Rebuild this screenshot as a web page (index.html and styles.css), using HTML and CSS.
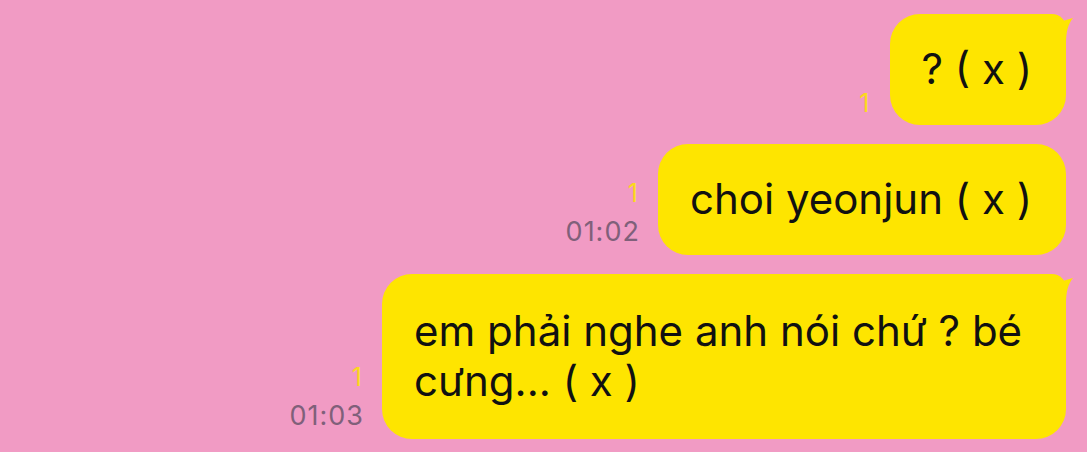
FILE: index.html
```html
<!DOCTYPE html>
<html lang="vi">
<head>
    <meta charset="UTF-8">
    <meta name="viewport" content="width=device-width, initial-scale=1.0">
    <title>Chat</title>
    <link rel="stylesheet" href="styles.css">
</head>
<body>
    <div class="chat">
        <div class="row">
            <div class="meta">
                <span class="unread">1</span>
            </div>
            <div class="bubble has-tail">
                ? ( x )
                <svg class="tail" width="36" height="40" viewBox="0 0 36 40"><path d="M0 0 C7 0 11 4 12 10 C18 8 25 6 32 4 C27 10 25 18 25 30 L25 40 L0 40 Z" fill="#fee500"/></svg>
            </div>
        </div>
        <div class="row">
            <div class="meta">
                <span class="unread">1</span>
                <span class="time">01:02</span>
            </div>
            <div class="bubble">choi yeonjun ( x )</div>
        </div>
        <div class="row">
            <div class="meta">
                <span class="unread">1</span>
                <span class="time">01:03</span>
            </div>
            <div class="bubble has-tail wide">
                em phải nghe anh nói chứ ? bé cưng... ( x )
                <svg class="tail" width="36" height="40" viewBox="0 0 36 40"><path d="M0 0 C7 0 11 4 12 10 C18 8 25 6 32 4 C27 10 25 18 25 30 L25 40 L0 40 Z" fill="#fee500"/></svg>
            </div>
        </div>
    </div>
</body>
</html>
```

FILE: styles.css
```css
body {
    margin: 0;
    background-color: #f19bc4;
    font-family: Inter, "Liberation Sans", Arial, sans-serif;
}
.chat {
    display: flex;
    flex-direction: column;
    gap: 19px;
    padding: 14px 21px 0 0;
}
.row {
    display: flex;
    justify-content: flex-end;
    align-items: flex-end;
    gap: 18px;
}
.meta {
    display: flex;
    flex-direction: column;
    align-items: flex-end;
    padding-bottom: 8px;
}
.unread {
    color: #fbd91c;
    font-size: 25px;
    line-height: 28px;
    margin-right: 2px;
}
.time {
    color: #80607a;
    font-size: 27px;
    line-height: 30px;
    letter-spacing: 1px;
    margin-top: 10px;
}
.bubble {
    position: relative;
    background-color: #fee500;
    color: #111;
    font-size: 42px;
    line-height: 50px;
    padding: 30px 34px 31px 32px;
    border-radius: 30px;
    max-width: 618px;
}
.bubble.wide {
    padding-top: 32px;
    padding-bottom: 33px;
}
.has-tail {
    border-top-right-radius: 14px;
}
.tail {
    position: absolute;
    top: 0;
    right: -11px;
}
```
